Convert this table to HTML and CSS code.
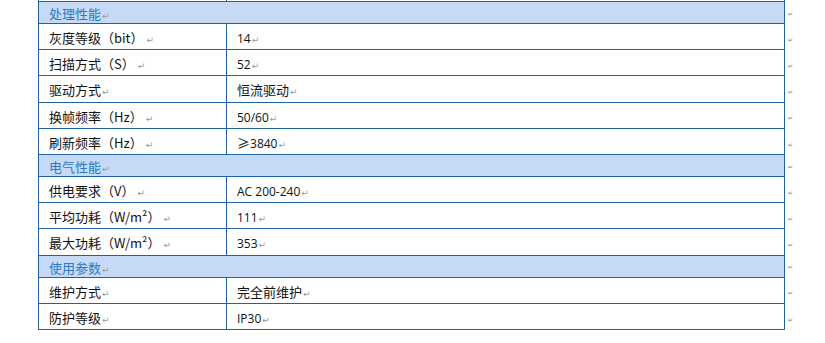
FILE: index.html
```html
<!DOCTYPE html>
<html lang="zh">
<head>
<meta charset="utf-8">
<link rel="stylesheet" href="styles.css">
</head>
<body>
<table class="spec">
  <colgroup><col class="c-label"><col class="c-value"><col class="c-eor"></colgroup>
  <tr class="stub"><td></td><td></td><td class="eor"></td></tr>
  <tr class="group"><td colspan="2">处理性能<span class="pm">↵</span></td><td class="eor"><span class="rm">↵</span></td></tr>
  <tr><td>灰度等级（bit）<span class="pm gap">↵</span></td><td><span class="lat">14</span><span class="pm">↵</span></td><td class="eor"><span class="rm">↵</span></td></tr>
  <tr><td>扫描方式（S）<span class="pm gap">↵</span></td><td><span class="lat">52</span><span class="pm">↵</span></td><td class="eor"><span class="rm">↵</span></td></tr>
  <tr><td>驱动方式<span class="pm">↵</span></td><td>恒流驱动<span class="pm">↵</span></td><td class="eor"><span class="rm">↵</span></td></tr>
  <tr><td>换帧频率（Hz）<span class="pm gap">↵</span></td><td><span class="lat">50/60</span><span class="pm">↵</span></td><td class="eor"><span class="rm">↵</span></td></tr>
  <tr><td>刷新频率（Hz）<span class="pm gap">↵</span></td><td>≥<span class="lat">3840</span><span class="pm">↵</span></td><td class="eor"><span class="rm">↵</span></td></tr>
  <tr class="group"><td colspan="2">电气性能<span class="pm">↵</span></td><td class="eor"><span class="rm">↵</span></td></tr>
  <tr><td>供电要求（V）<span class="pm gap">↵</span></td><td><span class="lat">AC 200-240</span><span class="pm">↵</span></td><td class="eor"><span class="rm">↵</span></td></tr>
  <tr><td>平均功耗（W/m²）<span class="pm gap">↵</span></td><td><span class="lat">111</span><span class="pm">↵</span></td><td class="eor"><span class="rm">↵</span></td></tr>
  <tr><td>最大功耗（W/m²）<span class="pm gap">↵</span></td><td><span class="lat">353</span><span class="pm">↵</span></td><td class="eor"><span class="rm">↵</span></td></tr>
  <tr class="group"><td colspan="2">使用参数<span class="pm">↵</span></td><td class="eor"><span class="rm">↵</span></td></tr>
  <tr><td>维护方式<span class="pm">↵</span></td><td>完全前维护<span class="pm">↵</span></td><td class="eor"><span class="rm">↵</span></td></tr>
  <tr><td>防护等级<span class="pm">↵</span></td><td><span class="lat">IP30</span><span class="pm">↵</span></td><td class="eor"><span class="rm">↵</span></td></tr>
</table>
</body>
</html>
```
FILE: styles.css
```css
html, body {
  margin: 0;
  padding: 0;
  background: #ffffff;
}
body {
  font-family: "Noto Sans CJK SC", "Noto Sans", sans-serif;
  font-size: 13px;
  color: #111111;
}
.spec {
  border-collapse: collapse;
  margin-left: 38px;
  table-layout: fixed;
  width: 760px;
}
.c-label { width: 188px; }
.c-value { width: 558px; }
.c-eor { width: 14px; }
.spec td {
  border: 1px solid #1f63a2;
  padding: 4px 0 2px 10px;
  line-height: 19.2px;
  white-space: nowrap;
  vertical-align: middle;
  overflow: hidden;
}
.spec tr.stub td {
  height: 1px;
  padding: 0;
  border-top: none;
  border-bottom: none;
  line-height: 0;
  font-size: 0;
}
.spec tr.group td {
  background: #c6daf5;
  color: #2a7bc0;
  padding: 3px 0 1px 10px;
  line-height: 17px;
}
.spec tr td.eor {
  border: none;
  background: none;
  padding: 0 0 0 3px;
  vertical-align: bottom;
  line-height: 0;
  font-size: 0;
}
.lat {
  font-family: "Open Sans", "Liberation Sans", sans-serif;
  font-size: 12px;
  line-height: 0;
}
.pm {
  color: #9a9a9a;
  font-size: 9px;
  line-height: 0;
  font-family: "DejaVu Sans", sans-serif;
  margin-left: 1px;
}
.pm.gap { margin-left: 3px; }
.rm {
  display: block;
  color: #7a7a7a;
  font-size: 6px;
  line-height: 6px;
  font-family: "DejaVu Sans", sans-serif;
  margin-bottom: 7px;
}
```
